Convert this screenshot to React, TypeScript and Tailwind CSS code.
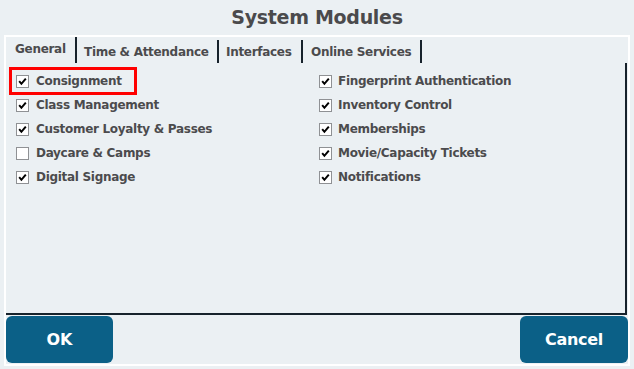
import React from 'react';

type Module = { label: string; checked: boolean; highlight?: boolean };

const leftModules: Module[] = [
  { label: 'Consignment', checked: true, highlight: true },
  { label: 'Class Management', checked: true },
  { label: 'Customer Loyalty & Passes', checked: true },
  { label: 'Daycare & Camps', checked: false },
  { label: 'Digital Signage', checked: true },
];

const rightModules: Module[] = [
  { label: 'Fingerprint Authentication', checked: true },
  { label: 'Inventory Control', checked: true },
  { label: 'Memberships', checked: true },
  { label: 'Movie/Capacity Tickets', checked: true },
  { label: 'Notifications', checked: true },
];

// tab widths include the 2px dark separator on the right
const tabs = [
  { label: 'General', cls: 'w-[71px] pl-[9px] pb-[3px]' },
  { label: 'Time & Attendance', cls: 'w-[142px] pl-[7px] mt-[3px]' },
  { label: 'Interfaces', cls: 'w-[84px] pl-[7px] mt-[3px]' },
  { label: 'Online Services', cls: 'w-[119px] pl-[8px] mt-[3px]' },
];

const CheckBox: React.FC<{ checked: boolean }> = ({ checked }) => (
  <span className="w-[13px] h-[13px] border border-[#8f9194] bg-white flex items-center justify-center shrink-0">
    {checked && (
      <svg width="9" height="9" viewBox="0 0 9 9">
        <path d="M1.2 4.2 L3.4 6.8 L7.8 1.6" fill="none" stroke="#000" strokeWidth="2" />
      </svg>
    )}
  </span>
);

const ModuleRow: React.FC<{ module: Module; gap: string }> = ({ module, gap }) => (
  <div className="h-[24px] flex items-center relative">
    {module.highlight && (
      <div className="absolute left-[-7px] top-[-2px] w-[128px] h-[28px] border-[3px] border-[#ff0000]" />
    )}
    <CheckBox checked={module.checked} />
    <span className={`${gap} text-[12px] font-bold tracking-[-0.3px] text-[#4b4b4d] whitespace-nowrap`}>
      {module.label}
    </span>
  </div>
);

const App: React.FC = () => {
  return (
    <div
      className="w-[634px] h-[369px] bg-[#ebf0f3] flex flex-col overflow-hidden"
      style={{ fontFamily: 'Tahoma, "DejaVu Sans", Verdana, sans-serif' }}
    >
      {/* Title */}
      <div className="h-[35px] flex items-center justify-center">
        <h1 className="text-[19px] font-bold text-[#4a4a4c] tracking-[-0.3px]">System Modules</h1>
      </div>

      {/* Frame */}
      <div className="mx-[4px] flex-1 border-2 border-white flex flex-col mb-[3px]">
        {/* Tabs */}
        <div className="h-[26px] flex items-stretch">
          {tabs.map(tab => (
            <div key={tab.label} className={`flex items-center border-r-2 border-[#17222b] ${tab.cls}`}>
              <span className="text-[12px] font-bold tracking-[-0.3px] text-[#4b4b4d] whitespace-nowrap">
                {tab.label}
              </span>
            </div>
          ))}
        </div>

        {/* Panel */}
        <div className="h-[252px] border-r-2 border-b-2 border-[#17222b] mr-[1px] pt-[6px] flex">
          <div className="w-[313px] pl-[10px] flex flex-col">
            {leftModules.map(m => (
              <ModuleRow key={m.label} module={m} gap="ml-[7px]" />
            ))}
          </div>
          <div className="flex-1 flex flex-col">
            {rightModules.map(m => (
              <ModuleRow key={m.label} module={m} gap="ml-[6px]" />
            ))}
          </div>
        </div>

        {/* Buttons */}
        <div className="flex justify-between pt-[1px]">
          <button className="w-[107px] h-[47px] rounded-[6px] bg-[#0b6087] text-white text-[16px] font-bold">
            OK
          </button>
          <button className="w-[108px] h-[47px] rounded-[6px] bg-[#0b6087] text-white text-[16px] font-bold tracking-[-0.3px]">
            Cancel
          </button>
        </div>
      </div>
    </div>
  );
};

export default App;
